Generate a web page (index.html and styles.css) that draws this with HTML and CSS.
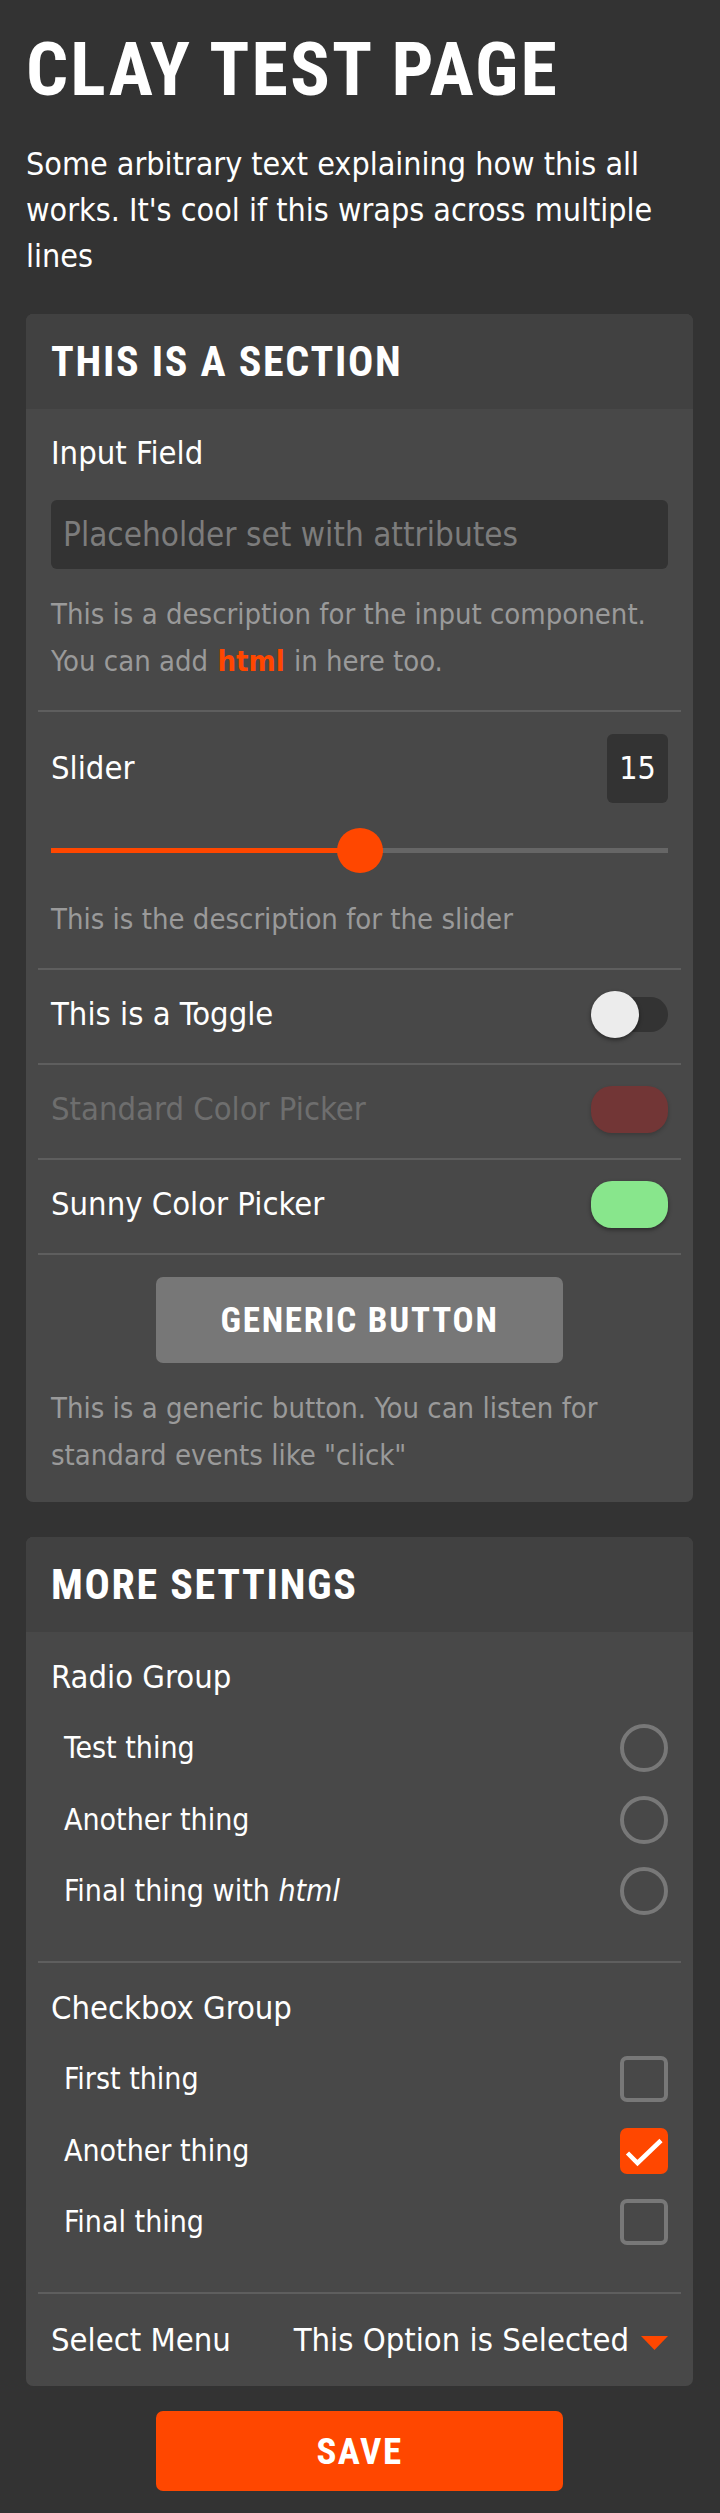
FILE: index.html
```html
<!DOCTYPE html>
<html lang="en">
<head>
<meta charset="utf-8">
<title>Clay Test Page</title>
<link rel="stylesheet" href="styles.css">
</head>
<body>
<div class="page">
  <h1 class="title">CLAY TEST PAGE</h1>
  <p class="intro">Some arbitrary text explaining how this all works. It's cool if this wraps across multiple lines</p>

  <section class="card">
    <header class="card-head">THIS IS A SECTION</header>
    <div class="card-body">
      <div class="item item-input">
        <div class="label">Input Field</div>
        <input class="input" type="text" placeholder="Placeholder set with attributes">
        <div class="desc">This is a description for the input component. You can add <strong class="accent">html</strong> in here too.</div>
      </div>

      <div class="item item-slider">
        <div class="row row-tall">
          <span class="label">Slider</span>
          <span class="value">15</span>
        </div>
        <div class="slider">
          <div class="track"><div class="fill" style="width:50%"></div></div>
          <div class="thumb" style="left:50%"></div>
        </div>
        <div class="desc desc-slider">This is the description for the slider</div>
      </div>

      <div class="item item-line">
        <div class="row">
          <span class="label">This is a Toggle</span>
          <span class="toggle"><span class="toggle-track"></span><span class="knob"></span></span>
        </div>
      </div>

      <div class="item item-line">
        <div class="row">
          <span class="label label-disabled">Standard Color Picker</span>
          <span class="swatch swatch-disabled"></span>
        </div>
      </div>

      <div class="item item-line">
        <div class="row">
          <span class="label">Sunny Color Picker</span>
          <span class="swatch swatch-sunny"></span>
        </div>
      </div>

      <div class="item item-button">
        <button class="btn btn-generic" type="button">GENERIC BUTTON</button>
        <div class="desc desc-button">This is a generic button. You can listen for standard events like "click"</div>
      </div>
    </div>
  </section>

  <section class="card card-second">
    <header class="card-head">MORE SETTINGS</header>
    <div class="card-body">
      <div class="item item-group">
        <div class="label">Radio Group</div>
        <div class="options">
          <div class="option"><span>Test thing</span><span class="radio"></span></div>
          <div class="option"><span>Another thing</span><span class="radio"></span></div>
          <div class="option"><span>Final thing with <em>html</em></span><span class="radio"></span></div>
        </div>
      </div>

      <div class="item item-group">
        <div class="label">Checkbox Group</div>
        <div class="options">
          <div class="option"><span>First thing</span><span class="check"></span></div>
          <div class="option"><span>Another thing</span><span class="check check-on"><svg class="tick" viewBox="0 0 48 46" width="48" height="46"><polyline points="7.5,25 17.5,35 41,12.5" fill="none" stroke="#fff" stroke-width="4.5"/></svg></span></div>
          <div class="option"><span>Final thing</span><span class="check"></span></div>
        </div>
      </div>

      <div class="item item-select">
        <div class="row">
          <span class="label">Select Menu</span>
          <span class="select-value">This Option is Selected<svg class="caret" viewBox="0 0 27 14" width="27" height="14"><polygon points="0,0 27,0 13.5,14" fill="#ff4700"/></svg></span>
        </div>
      </div>
    </div>
  </section>

  <button class="btn btn-save" type="button">SAVE</button>
</div>
</body>
</html>
```
FILE: styles.css
```css
* { box-sizing: border-box; }

body {
  margin: 0;
  background: #333333;
  color: #ffffff;
  font-family: "DejaVu Sans Condensed", "DejaVu Sans", sans-serif;
  font-size: 32px;
  line-height: 46px;
}

.page {
  padding: 26px 27px 21px 26px;
  display: flex;
  flex-direction: column;
}

.title {
  margin: 0;
  font-family: "Roboto Condensed", Roboto, sans-serif;
  font-weight: 700;
  font-size: 74px;
  line-height: 88px;
  letter-spacing: 2.2px;
}

.intro {
  margin: 27px 0 0;
  font-size: 32px;
  line-height: 46px;
}

.card {
  margin-top: 34.5px;
  background: #484848;
  border-radius: 7px;
  overflow: hidden;
}

.card-second { margin-top: 35px; }

.card-head {
  background: #414141;
  height: 95px;
  padding: 2px 25px 0;
  font-family: "Roboto Condensed", Roboto, sans-serif;
  font-weight: 700;
  font-size: 42px;
  line-height: 92px;
  letter-spacing: 1.7px;
}

.card-body { padding: 0 12px; }

.item {
  padding: 21px 13px 24.5px;
  border-bottom: 2px solid #5e5e5e;
  display: flex;
  flex-direction: column;
}

.item:last-child { border-bottom: none; }

.item-slider { padding-top: 22px; }
.item-line { padding-bottom: 25px; }
.item-button { padding-top: 22.5px; padding-bottom: 23.5px; }
.item-group { padding-top: 21.5px; padding-bottom: 34px; }
.item-select { padding-top: 22px; padding-bottom: 23px; }

.label {
  color: #ffffff;
  font-size: 32.5px;
  line-height: 46px;
}

.label-disabled { color: #6e6e6e; }

.input {
  margin-top: 24px;
  height: 69px;
  width: 100%;
  border: none;
  border-radius: 6px;
  background: #333333;
  color: #ffffff;
  padding: 0 12px;
  font-family: "DejaVu Sans Condensed", "DejaVu Sans", sans-serif;
  font-size: 33px;
}

.input::placeholder { color: #7c7c7c; }

.desc {
  margin-top: 22.5px;
  color: #9a9a9a;
  font-size: 29px;
  line-height: 47px;
}

.accent {
  color: #ff4700;
  font-weight: 700;
  margin: 0 1px;
}

.row {
  display: flex;
  justify-content: space-between;
  align-items: center;
  min-height: 47px;
}

.row-tall { height: 69px; }

.value {
  width: 61px;
  height: 69px;
  background: #333333;
  border-radius: 6px;
  display: flex;
  align-items: center;
  justify-content: center;
  font-size: 32px;
}

.slider {
  position: relative;
  height: 45px;
  margin: 25px 23px 0;
}

.track {
  position: absolute;
  left: -23px;
  right: -23px;
  top: 20px;
  height: 5px;
  background: #666666;
}

.fill {
  height: 100%;
  background: #ff4700;
}

.slider .fill { width: calc(50% + 23px) !important; }

.thumb {
  position: absolute;
  top: 0;
  width: 46px;
  height: 45px;
  margin-left: -23px;
  border-radius: 50%;
  background: #ff4700;
}

.desc-slider { margin-top: 23.5px; }

.toggle {
  position: relative;
  width: 77px;
  height: 47px;
}

.toggle-track {
  position: absolute;
  left: 10px;
  right: 0;
  top: 6px;
  height: 35px;
  border-radius: 17.5px;
  background: #333333;
}

.knob {
  position: absolute;
  left: 0;
  top: 0;
  width: 48px;
  height: 47px;
  border-radius: 50%;
  background: #ececec;
  box-shadow: 0 2px 4px rgba(0, 0, 0, 0.45);
}

.swatch {
  width: 77px;
  height: 47px;
  border-radius: 21px;
  box-shadow: 0 2px 4px rgba(0, 0, 0, 0.4);
}

.swatch-disabled { background: #723636; box-shadow: 0 2px 4px rgba(0, 0, 0, 0.2); }
.swatch-sunny { background: #88e68c; }

.btn {
  display: flex;
  align-items: center;
  justify-content: center;
  width: 407px;
  border: none;
  border-radius: 7px;
  color: #ffffff;
  font-family: "Roboto Condensed", Roboto, sans-serif;
  font-weight: 700;
  padding: 0;
}

.btn-generic {
  align-self: center;
  height: 86px;
  background: #777777;
  font-size: 35px;
  letter-spacing: 1.8px;
}

.desc-button { margin-top: 21.5px; }

.options {
  padding: 13px 0 0 13px;
  display: flex;
  flex-direction: column;
}

.option {
  height: 71.5px;
  display: flex;
  align-items: center;
  justify-content: space-between;
  font-size: 30px;
  line-height: 46px;
}

.option em { font-style: oblique; }

.radio {
  width: 48px;
  height: 48px;
  border: 4px solid #787878;
  border-radius: 50%;
}

.check {
  width: 48px;
  height: 46px;
  border: 4px solid #787878;
  border-radius: 7px;
}

.check-on {
  border: none;
  background: #ff4700;
}

.tick { display: block; }

.select-value {
  display: flex;
  align-items: center;
  gap: 12px;
  font-size: 32.5px;
}

.caret { margin-top: 6px; }

.btn-save {
  align-self: center;
  margin-top: 25px;
  height: 80px;
  background: #ff4700;
  font-size: 37px;
  letter-spacing: 1.5px;
}
```
